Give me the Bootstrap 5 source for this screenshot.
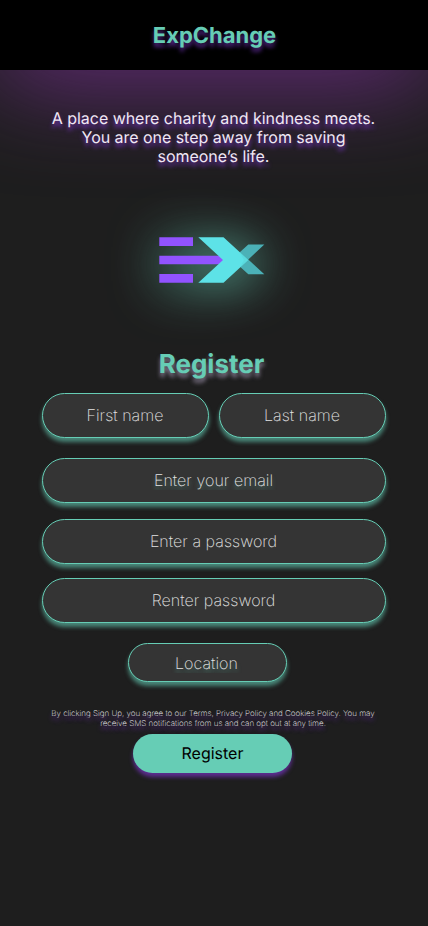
<!DOCTYPE html>
<html lang="en">
<head>
<meta charset="utf-8">
<meta name="viewport" content="width=device-width, initial-scale=1">
<title>ExpChange</title>
<link href="https://cdn.jsdelivr.net/npm/bootstrap@5.3.0/dist/css/bootstrap.min.css" rel="stylesheet">
<style>
  body { background: #1e1e1e; font-family: Inter, sans-serif; min-height: 926px; overflow-x: hidden; text-rendering: geometricPrecision; }
  input, button { text-rendering: inherit; }
  .site-header { height: 70px; padding-top: 2px; background: #000; box-shadow: 0 4px 100px 4px #732e8c; }
  .brand-name { padding-left: 1px; font-size: 22px; line-height: 27px; color: #66cdb5; text-shadow: 0 4px 4px rgba(113,51,184,.75); }
  .tagline { margin-top: 39px; padding: 0 49px 0 48px; font-size: 16px; line-height: 19px; letter-spacing: -.04px; color: #f0e8f4; text-shadow: 0 4px 4px #7133b8; }
  .logo-mark { margin: 70px 0 0 158px; overflow: visible; filter: drop-shadow(0 4px 25px #66cdb5); }
  .form-title { margin-top: 65px; padding-right: 5px; font-size: 26px; line-height: 32px; color: #66cdb5; text-shadow: 0 4px 4px rgba(200,185,220,.6); }
  .signup-form { padding: 0 42px; margin-top: 12px; }
  .name-row { gap: 10px; }
  .pill-field, .pill-field:focus { height: 45px; padding: 0 1px 2px 0; border: 1px solid #66cdb5; background: #343434; color: #fff; font-size: 16px; font-weight: 200; letter-spacing: .05px; box-shadow: 0 4px 4px rgba(102,205,181,.6); }
  .pill-field::placeholder { color: #e4e4e4; opacity: 1; }
  .glow-text::placeholder { text-shadow: 0 4px 4px rgba(102,205,181,.5); }
  .email-field { margin-top: 20px; }
  .pass-field { margin-top: 16px; }
  .repeat-field { margin-top: 14px; }
  .place-field { width: 159px; height: 39px; margin: 20px 0 0 86px; padding: 1px 2px 0 0; }
  .terms-note { margin: 26px 0 0; padding-right: 2px; font-size: 8px; line-height: 10px; font-weight: 200; color: #f0f0f0; text-shadow: 0 4px 4px #7133b8; }
  .submit-pill, .submit-pill:hover { width: 159px; height: 39px; margin: 6px 0 0 91px; padding: 0 0 2px; border: 0; background: #66cdb5; color: #000; font-size: 16px; box-shadow: 0 4px 4px rgba(113,51,184,.75); }
</style>
</head>
<body>
<header class="site-header d-flex align-items-center justify-content-center">
  <div class="brand-name fw-bold">ExpChange</div>
</header>
<main class="text-center">
  <p class="tagline mb-0">A place where charity and kindness meets. You are one step away from saving someone’s life.</p>
  <svg class="logo-mark d-block" width="108" height="48" viewBox="158 236 108 48" role="img" aria-label="EX">
    <g fill="#9153ff">
      <path d="M159.3 237.3H193V246H159.3ZM159.3 255.7H224V264.3H159.3ZM159.3 274H193V282.7H159.3Z"/>
    </g>
    <path fill="#4bb1b7" d="M239.5 252.5L248.3 244.6H264.3L248.3 259.5L264.3 274.2H248.3L239.5 266.2Z"/>
    <path fill="#5de2e7" d="M198.3 237.3H223.5L248.3 260L223.5 282.7H198.3L223 260Z"/>
    <path fill="#57c9ce" d="M240 252.4L248.3 260L240 267.6L244 260Z" opacity=".3"/>
  </svg>
  <h1 class="form-title fw-bold mb-0">Register</h1>
  <form class="signup-form">
    <div class="name-row d-flex">
      <input class="form-control pill-field rounded-pill text-center" type="text" placeholder="First name" aria-label="First name">
      <input class="form-control pill-field rounded-pill text-center" type="text" placeholder="Last name" aria-label="Last name">
    </div>
    <input class="form-control pill-field glow-text email-field rounded-pill text-center" type="email" placeholder="Enter your email" aria-label="Email">
    <input class="form-control pill-field pass-field rounded-pill text-center" type="password" placeholder="Enter a password" aria-label="Password">
    <input class="form-control pill-field repeat-field rounded-pill text-center" type="password" placeholder="Renter password" aria-label="Repeat password">
    <input class="form-control pill-field glow-text place-field rounded-pill text-center" type="text" placeholder="Location" aria-label="Location">
    <p class="terms-note">By clicking Sign Up, you agree to our Terms, Privacy Policy and Cookies Policy. You may receive SMS notifications from us and can opt out at any time.</p>
    <button class="btn submit-pill rounded-pill d-block" type="button">Register</button>
  </form>
</main>
<script src="https://cdn.jsdelivr.net/npm/bootstrap@5.3.0/dist/js/bootstrap.bundle.min.js"></script>
</body>
</html>
